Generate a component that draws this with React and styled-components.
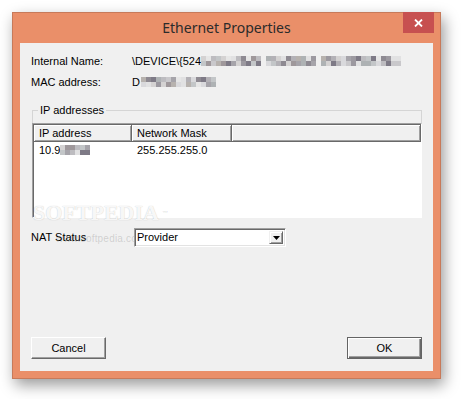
import React from "react";
import styled, { createGlobalStyle } from "styled-components";

const Global = createGlobalStyle`
  html, body { margin: 0; padding: 0; background: #ffffff; }
  body { width: 461px; height: 399px; overflow: hidden; }
`;

const Window = styled.div`
  box-sizing: border-box;
  margin: 12px 0 0 12px;
  width: 429px;
  height: 367px;
  border: 1px solid #c77a5a;
  background: #ea8f69;
  display: flex;
  flex-direction: column;
  box-shadow: 3px 6px 14px rgba(0, 0, 0, 0.4);
`;

const TitleBar = styled.div`
  height: 30px;
  display: grid;
  grid-template-columns: 1fr auto 1fr;
  align-items: start;
`;

const Title = styled.div`
  grid-column: 2;
  font-family: "Noto Sans", sans-serif;
  font-size: 14px;
  line-height: 30px;
  color: #2b2b2b;
`;

const CloseButton = styled.div`
  grid-column: 3;
  justify-self: end;
  margin-top: -1px;
  margin-right: 6px;
  width: 31px;
  height: 21px;
  background: #c75050;
  display: flex;
  align-items: center;
  justify-content: center;
`;

const Client = styled.div`
  position: relative;
  flex: 1;
  margin: 0 7px 7px;
  background: #f0f0f0;
  padding: 11px 11px 12px;
  display: flex;
  flex-direction: column;
  font-family: "Liberation Sans", Arial, sans-serif;
  font-size: 11px;
  color: #000;
`;

const InfoList = styled.div`
  display: flex;
  flex-direction: column;
  gap: 7px;
`;

const InfoRow = styled.div`
  display: grid;
  grid-template-columns: 101px 1fr;
  height: 14px;
  line-height: 14px;
`;

const Value = styled.div`
  display: flex;
  align-items: center;
  white-space: nowrap;
`;

const MosaicGrid = styled.div`
  display: grid;
  grid-template-columns: repeat(${(p) => p.$cols}, 5px);
  grid-auto-rows: 5px;
  margin-left: ${(p) => p.$gap || 0}px;
`;

const Cell = styled.div`
  width: 5px;
  height: 5px;
`;

const Group = styled.div`
  position: relative;
  margin: 21px 0 0 1px;
  width: 390px;
  box-sizing: border-box;
  border: 1px solid #d5d5d5;
  border-bottom: none;
`;

const Legend = styled.div`
  position: absolute;
  top: -8px;
  left: 5px;
  padding: 0 2px;
  line-height: 14px;
  background: #f0f0f0;
`;

const ListView = styled.div`
  margin: 12px -1px 0;
  height: 95px;
  box-sizing: border-box;
  background: #ffffff;
  border: 1px solid;
  border-color: #a0a0a0 #ffffff #ffffff #a0a0a0;
  box-shadow: inset 1px 1px #696969;
  padding: 1px 0 0 1px;
`;

const cols = "98px 100px 1fr";

const Header = styled.div`
  display: grid;
  grid-template-columns: ${cols};
  height: 17px;
`;

const HeaderCell = styled.div`
  box-sizing: border-box;
  background: #f0f0f0;
  border-right: 1px solid #696969;
  border-bottom: 1px solid #696969;
  box-shadow: inset 1px 1px #ffffff, inset -1px -1px #a0a0a0;
  padding-left: 5px;
  line-height: 16px;
  white-space: nowrap;
`;

const Row = styled.div`
  display: grid;
  grid-template-columns: ${cols};
  height: 16px;
  line-height: 16px;
`;

const RowCell = styled.div`
  display: flex;
  align-items: center;
  padding-left: 5px;
  white-space: nowrap;
`;

const NatRow = styled.div`
  position: relative;
  z-index: 1;
  margin-top: 10px;
  display: grid;
  grid-template-columns: 103px 152px;
  height: 19px;
  line-height: 19px;
`;

const Combo = styled.div`
  box-sizing: border-box;
  height: 19px;
  background: #ffffff;
  border: 1px solid;
  border-color: #a0a0a0 #ffffff #ffffff #a0a0a0;
  box-shadow: inset 1px 1px #696969, inset -1px -1px #e3e3e3;
  padding: 0 2px 0 2px;
  display: flex;
  align-items: center;
  justify-content: space-between;
  line-height: 15px;
`;

const DropButton = styled.div`
  box-sizing: border-box;
  width: 14px;
  height: 13px;
  background: #f0f0f0;
  border: 1px solid;
  border-color: #f0f0f0 #696969 #696969 #f0f0f0;
  box-shadow: inset 1px 1px #ffffff, inset -1px -1px #a0a0a0;
  display: flex;
  align-items: center;
  justify-content: center;
`;

const Footer = styled.div`
  margin-top: auto;
  display: flex;
  justify-content: space-between;
`;

const Button = styled.div`
  box-sizing: border-box;
  width: 75px;
  height: 22px;
  background: #f0f0f0;
  display: flex;
  align-items: center;
  justify-content: center;
  border: 1px solid;
  border-color: ${(p) =>
    p.$default ? "#646464" : "#ffffff #696969 #696969 #ffffff"};
  box-shadow: ${(p) =>
    p.$default
      ? "inset 1px 1px #ffffff, inset -1px -1px #696969, inset -2px -2px #a0a0a0"
      : "inset -1px -1px #a0a0a0"};
`;

const Watermark = styled.div`
  position: absolute;
  left: 13px;
  top: 158px;
  font-family: "Liberation Serif", serif;
  font-weight: bold;
  font-size: 22px;
  line-height: 24px;
  color: rgba(255, 255, 255, 0.9);
  text-shadow: 0 0 1px rgba(0, 0, 0, 0.25);
  pointer-events: none;
`;

const Tm = styled.span`
  font-size: 6px;
  vertical-align: top;
  margin-left: 3px;
  font-family: "Liberation Sans", sans-serif;
  color: rgba(0, 0, 0, 0.15);
  text-shadow: none;
`;

const SiteMark = styled.div`
  position: absolute;
  z-index: 0;
  left: 36px;
  top: 190px;
  font-family: "Liberation Sans Narrow", "Liberation Sans", sans-serif;
  font-size: 10px;
  letter-spacing: 0.2px;
  color: rgba(120, 120, 120, 0.28);
  pointer-events: none;
`;

const palette = [
  "#c9c8cb", "#b3b1b6", "#a6a4aa", "#d4d2d2", "#9c99a0", "#bdbcc0",
  "#e1e1e2", "#8e8a92", "#aeb2b4", "#c3c6c8", "#9f989b", "#d9d9dc",
  "#7e7a86", "#b7b2ae", "#e6e6e6",
];

function Mosaic({ cols, rows = 2, seed = 1, gap = 0 }) {
  let s = seed * 9301 + 49297;
  const cells = [];
  for (let i = 0; i < cols * rows; i++) {
    s = (s * 9301 + 49297) % 233280;
    const c = palette[Math.floor((s / 233280) * palette.length)];
    cells.push(<Cell key={i} style={{ background: c }} />);
  }
  return (
    <MosaicGrid $cols={cols} $gap={gap}>
      {cells}
    </MosaicGrid>
  );
}

export default function App() {
  return (
    <>
      <Global />
      <Window>
        <TitleBar>
          <Title>Ethernet Properties</Title>
          <CloseButton>
            <svg width="9" height="8" viewBox="0 0 9 8">
              <path d="M1 0.5 L8 7.5 M8 0.5 L1 7.5" stroke="#fff" strokeWidth="1.8" />
            </svg>
          </CloseButton>
        </TitleBar>
        <Client>
          <SiteMark>www.softpedia.com</SiteMark>
          <InfoList>
            <InfoRow>
              <span>Internal Name:</span>
              <Value>
                \DEVICE\&#123;524
                <Mosaic cols={12} seed={3} />
                <Mosaic cols={10} seed={7} gap={5} />
                <Mosaic cols={16} seed={11} gap={5} />
              </Value>
            </InfoRow>
            <InfoRow>
              <span>MAC address:</span>
              <Value>
                D
                <Mosaic cols={15} seed={5} gap={1} />
              </Value>
            </InfoRow>
          </InfoList>

          <Group>
            <Legend>IP addresses</Legend>
            <ListView>
              <Header>
                <HeaderCell>IP address</HeaderCell>
                <HeaderCell>Network Mask</HeaderCell>
                <HeaderCell />
              </Header>
              <Row>
                <RowCell>
                  10.9
                  <Mosaic cols={6} seed={9} />
                </RowCell>
                <RowCell>255.255.255.0</RowCell>
                <RowCell />
              </Row>
            </ListView>
          </Group>

          <NatRow>
            <span>NAT Status</span>
            <Combo>
              <span>Provider</span>
              <DropButton>
                <svg width="7" height="4" viewBox="0 0 7 4">
                  <path d="M0 0 H7 L3.5 4 Z" fill="#000" />
                </svg>
              </DropButton>
            </Combo>
          </NatRow>

          <Footer>
            <Button>Cancel</Button>
            <Button $default>OK</Button>
          </Footer>

          <Watermark>
            SOFTPEDIA<Tm>™</Tm>
          </Watermark>
        </Client>
      </Window>
    </>
  );
}
